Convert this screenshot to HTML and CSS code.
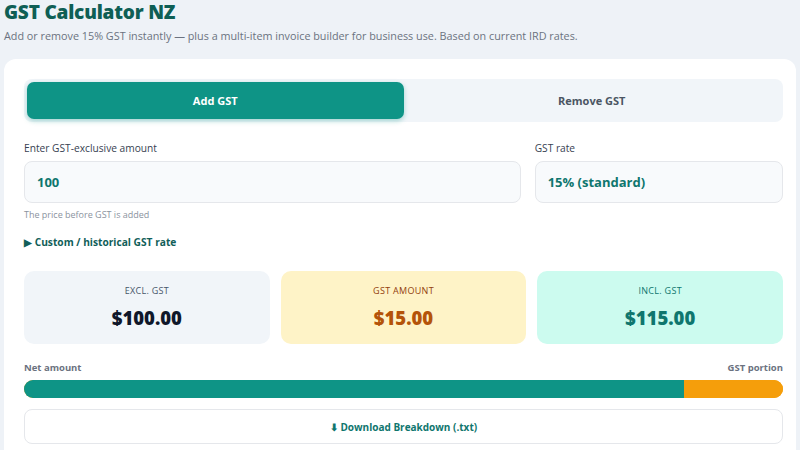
FILE: index.html
```html
<!DOCTYPE html>
<html lang="en">
<head>
<meta charset="utf-8">
<title>GST Calculator NZ</title>
<link rel="stylesheet" href="styles.css">
</head>
<body>
<header class="page-head">
  <h1 class="title">GST Calculator NZ</h1>
  <p class="subtitle">Add or remove 15% GST instantly — plus a multi-item invoice builder for business use. Based on current IRD rates.</p>
</header>
<main class="card">
  <div class="toggle">
    <button class="tab tab-active">Add GST</button>
    <button class="tab">Remove GST</button>
  </div>
  <div class="fields">
    <div class="field">
      <label class="label">Enter GST-exclusive amount</label>
      <div class="input">100</div>
      <div class="hint">The price before GST is added</div>
    </div>
    <div class="field">
      <label class="label">GST rate</label>
      <div class="input">15% (standard)</div>
    </div>
  </div>
  <div class="custom">▶ Custom / historical GST rate</div>
  <div class="results">
    <div class="result result-excl">
      <div class="result-label">EXCL. GST</div>
      <div class="result-value">$100.00</div>
    </div>
    <div class="result result-gst">
      <div class="result-label">GST AMOUNT</div>
      <div class="result-value">$15.00</div>
    </div>
    <div class="result result-incl">
      <div class="result-label">INCL. GST</div>
      <div class="result-value">$115.00</div>
    </div>
  </div>
  <div class="bar-labels">
    <span>Net amount</span>
    <span>GST portion</span>
  </div>
  <div class="bar">
    <div class="bar-net" style="width: 86.96%"></div>
    <div class="bar-gst"></div>
  </div>
  <button class="download">⬇ Download Breakdown (.txt)</button>
</main>
</body>
</html>
```
FILE: styles.css
```css
* { box-sizing: border-box; }
html, body {
  margin: 0;
  padding: 0;
  background: #eef2f7;
  font-family: "Open Sans", "Noto Sans", sans-serif;
  color: #1f2937;
}
body {
  padding: 1px 4px 0;
  height: 450px;
  overflow: hidden;
}
.title {
  margin: 0;
  font-size: 19px;
  line-height: 22px;
  font-weight: 800;
  color: #0f5f55;
  letter-spacing: -0.2px;
}
.subtitle {
  margin: 5px 0 0;
  font-size: 10.8px;
  line-height: 16px;
  color: #6b7280;
}
.card {
  margin-top: 15px;
  background: #ffffff;
  border-radius: 12px;
  padding: 20px 13px 20px 20px;
  min-height: 395px;
}
.toggle {
  display: grid;
  grid-template-columns: 1fr 1fr;
  background: #f1f5f9;
  border-radius: 8px;
  padding: 3px;
  height: 43px;
}
.tab {
  border: 0;
  background: transparent;
  font-family: inherit;
  font-size: 11px;
  font-weight: 700;
  color: #4b5563;
  border-radius: 7px;
  cursor: pointer;
}
.tab-active {
  background: #0e9486;
  color: #ffffff;
  box-shadow: 0 2px 5px rgba(13, 148, 136, 0.35);
}
.fields {
  display: grid;
  grid-template-columns: 2fr 1fr;
  gap: 14px;
  margin-top: 18px;
}
.field {
  display: flex;
  flex-direction: column;
}
.label {
  font-size: 10.2px;
  line-height: 16px;
  font-weight: 500;
  color: #374151;
  margin-bottom: 5px;
}
.input {
  height: 42px;
  background: #f8fafc;
  border: 1px solid #e5e7eb;
  border-radius: 8px;
  padding: 0 12px;
  display: flex;
  align-items: center;
  font-size: 13px;
  font-weight: 700;
  color: #0f766e;
}
.hint {
  margin-top: 5px;
  font-size: 9px;
  line-height: 13px;
  color: #8b93a0;
}
.custom {
  margin-top: 14px;
  font-size: 10.2px;
  line-height: 14px;
  font-weight: 700;
  color: #115e59;
}
.results {
  display: grid;
  grid-template-columns: repeat(3, 1fr);
  gap: 11px;
  margin-top: 22px;
}
.result {
  height: 73px;
  border-radius: 10px;
  display: flex;
  flex-direction: column;
  align-items: center;
  justify-content: flex-start;
  gap: 10px;
  padding-top: 14px;
}
.result-label {
  font-size: 9px;
  line-height: 12px;
  font-weight: 500;
  letter-spacing: 0.3px;
}
.result-value {
  font-size: 18.5px;
  line-height: 22px;
  font-weight: 800;
}
.result-excl { background: #f1f5f9; }
.result-excl .result-label { color: #475569; }
.result-excl .result-value { color: #0f172a; }
.result-gst { background: #fef3c7; }
.result-gst .result-label { color: #92400e; }
.result-gst .result-value { color: #b45309; }
.result-incl { background: #ccfbef; }
.result-incl .result-label { color: #0f766e; }
.result-incl .result-value { color: #0f766e; }
.bar-labels {
  display: flex;
  justify-content: space-between;
  margin-top: 17px;
  font-size: 9.5px;
  line-height: 13px;
  font-weight: 700;
  color: #6b7280;
}
.bar {
  display: flex;
  height: 18px;
  margin-top: 6px;
  border-radius: 9px;
  overflow: hidden;
  background: #f59e0b;
}
.bar-net { background: #0e9486; }
.bar-gst { flex: 1; background: #f59e0b; }
.download {
  display: block;
  width: 100%;
  margin-top: 11px;
  height: 35px;
  background: #ffffff;
  border: 1px solid #e5e7eb;
  border-radius: 8px;
  font-family: inherit;
  font-size: 10px;
  font-weight: 700;
  color: #0f766e;
  cursor: pointer;
}
```
